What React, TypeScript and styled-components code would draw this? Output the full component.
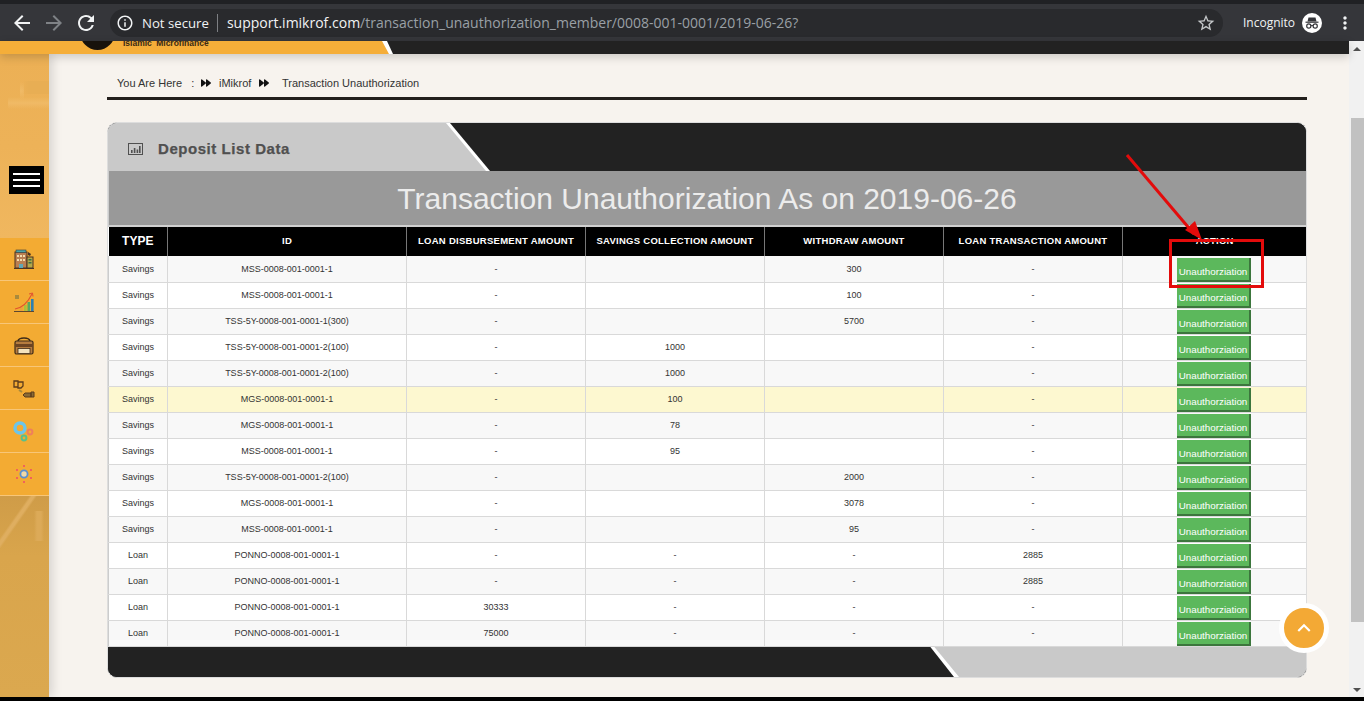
import React, { FC } from "react";
import styled, { createGlobalStyle } from "styled-components";
import { MdArrowBack, MdArrowForward, MdRefresh, MdInfoOutline, MdStarBorder, MdMoreVert, MdKeyboardArrowUp } from "react-icons/md";
import { FaForward } from "react-icons/fa";

const GlobalStyle = createGlobalStyle`
  html, body { margin: 0; padding: 0; height: 100%; overflow: hidden; background: #000; }
  #root { height: 100%; }
  * { box-sizing: border-box; }
`;

const Screen = styled.div`
  position: relative;
  width: 1364px;
  height: 701px;
  display: flex;
  flex-direction: column;
  overflow: hidden;
  font-family: "Liberation Sans", Arial, sans-serif;
`;

/* browser chrome */
const Toolbar = styled.div`
  height: 41px;
  flex: none;
  background: #35363a;
  border-top: 4px solid #202124;
  display: flex;
  align-items: center;
  padding-left: 6px;
  color: #f1f3f4;
  font-family: "Open Sans", "Noto Sans", sans-serif;
`;

const NavBtn = styled.span<{ $dim?: boolean }>`
  width: 32px;
  height: 32px;
  display: flex;
  align-items: center;
  justify-content: center;
  font-size: 24px;
  color: ${p => (p.$dim ? "#7f8286" : "#f1f3f4")};
`;

const MenuBtn = styled(NavBtn)`
  margin-left: 7px;
`;

const Omnibox = styled.div`
  width: 1113px;
  height: 28px;
  margin-left: 8px;
  background: #292a2d;
  border-radius: 14px;
  display: flex;
  align-items: center;
  padding: 0 7px 0 6px;
  font-size: 14px;
  white-space: nowrap;
`;

const SecureLabel = styled.span`
  margin-left: 8px;
  padding-right: 8px;
  border-right: 1px solid #7d7f83;
  line-height: 18px;
  font-size: 13.2px;
`;

const Url = styled.span`
  margin-left: 9px;
  flex: 1;
  color: #9aa0a6;
  font-size: 14px;
  span { color: #f1f3f4; }
`;

const IncognitoLabel = styled.span`
  margin-left: 20px;
  font-size: 12px;
  width: 59px;
`;

const Viewport = styled.div`
  flex: 1;
  display: flex;
  min-height: 0;
`;

const Page = styled.div`
  flex: 1;
  display: flex;
  flex-direction: column;
  background: #f7f3ee;
  min-width: 0;
`;

/* site header, mostly scrolled away */
const SiteHeader = styled.div`
  position: relative;
  z-index: 2;
  height: 13px;
  flex: none;
  background: #222;
  box-shadow: 0 3px 10px rgba(0, 0, 0, 0.18);
  overflow: hidden;
`;

const HeaderSlash = styled.div`
  width: 393px;
  height: 100%;
  background: #fff;
  clip-path: polygon(0 0, 387px 0, 393px 100%, 0 100%);
`;

const HeaderTab = styled.div`
  width: 389px;
  height: 100%;
  background: #f5ae39;
  clip-path: polygon(0 0, 382px 0, 389px 100%, 0 100%);
  display: flex;
  align-items: flex-start;
  padding-left: 80px;
`;

const LogoDisc = styled.div`
  width: 35px;
  height: 35px;
  margin-top: -26px;
  border-radius: 50%;
  background: #17120c;
  flex: none;
`;

const LogoText = styled.div`
  margin: -2px 0 0 8px;
  font-size: 8.5px;
  line-height: 9px;
  font-weight: bold;
  color: #3a2a14;
  word-spacing: 2px;
  white-space: nowrap;
`;

const Body = styled.div`
  flex: 1;
  display: flex;
  min-height: 0;
`;

const Sidebar = styled.aside`
  width: 49px;
  flex: none;
  display: flex;
  flex-direction: column;
  box-shadow: 3px 0 10px rgba(0, 0, 0, 0.14);
  position: relative;
`;

const SideTop = styled.div`
  height: 184px;
  flex: none;
  background:
    linear-gradient(90deg, transparent 0, #e8ae54 25%, #e8ae54 100%) 22px 27px / 27px 13px no-repeat,
    linear-gradient(180deg, transparent 0, #f0ba66 50%, transparent 100%) 8px 43px / 41px 12px no-repeat,
    linear-gradient(180deg, transparent 0, #f0ba66 50%, transparent 100%) 20px 28px / 4px 18px no-repeat,
    linear-gradient(180deg, #ecb055 0%, #edb258 50%, #f0b75f 100%);
  display: flex;
  align-items: flex-end;
  padding: 0 0 44px 9px;
`;

const Burger = styled.div`
  width: 35px;
  height: 28px;
  background: #000;
  display: flex;
  flex-direction: column;
  justify-content: center;
  gap: 4px;
  padding: 0 4px;
  span { display: block; height: 2px; background: #fff; }
`;

const SideItem = styled.div`
  height: 43px;
  flex: none;
  background: #f3ab33;
  border-bottom: 1px solid #f8c678;
  display: flex;
  align-items: center;
  justify-content: center;
  padding-right: 1px;
`;

const SideBottom = styled.div`
  flex: 1;
  background:
    linear-gradient(125deg, transparent 32%, #dfae60 35%, #dfae60 38%, transparent 41%) 0 0 / 49px 60px no-repeat,
    linear-gradient(90deg, transparent 0, #dcaa58 30%, #dcaa58 70%, transparent 100%) 34px 15px / 10px 30px no-repeat,
    linear-gradient(180deg, #cf9c48 0, #d9a54c 30%, #dba84f 100%);
`;

const Content = styled.main`
  flex: 1;
  min-width: 0;
  padding: 0 42px 0 58px;
`;

const Crumbs = styled.div`
  height: 46px;
  border-bottom: 3px solid #231f1c;
  padding: 21px 0 0 10px;
  display: flex;
  align-items: flex-start;
  font-size: 11px;
  line-height: 16px;
  color: #333;
`;

const CrumbLead = styled.span`
  width: 84px;
  flex: none;
`;

const CrumbSep = styled.span<{ $w: number }>`
  display: inline-flex;
  align-items: center;
  height: 16px;
  width: ${p => p.$w}px;
  flex: none;
  font-size: 10px;
  color: #111;
`;

const CrumbText = styled.span<{ $w?: number }>`
  flex: none;
  ${p => (p.$w ? `width: ${p.$w}px;` : "")}
`;

const Panel = styled.section`
  margin-top: 22px;
  height: 556px;
  border: 1px solid #ddd;
  border-radius: 10px;
  background: #222;
  overflow: hidden;
  display: flex;
  flex-direction: column;
`;

const PanelHead = styled.div`
  height: 48px;
  flex: none;
  background: #222;
`;

const HeadSlash = styled.div`
  width: 382px;
  height: 100%;
  background: #fff;
  clip-path: polygon(0 0, 342px 0, 382px 100%, 0 100%);
`;

const HeadTab = styled.div`
  height: 100%;
  background: #c9c9c9;
  clip-path: polygon(0 0, 338px 0, 378px 100%, 0 100%);
  display: flex;
  align-items: center;
  padding: 3px 0 0 20px;
  color: #505050;
  font-size: 15px;
  font-weight: bold;
  letter-spacing: 0.55px;
  -webkit-text-stroke: 0.25px #505050;
  gap: 15px;
`;

const TitleBand = styled.h1`
  margin: 0;
  height: 56px;
  flex: none;
  background: #999;
  border-bottom: 2px solid #d0d0d0;
  color: #ececec;
  font-size: 30px;
  font-weight: normal;
  line-height: 55px;
  text-align: center;
  box-shadow: inset 1px 0 0 #ccc;
`;

const Table = styled.table`
  width: 1198px;
  table-layout: fixed;
  border-collapse: collapse;
  flex: none;
  background: #fff;
`;

const HeadCell = styled.th<{ $w: number; $big?: boolean }>`
  width: ${p => p.$w}px;
  height: 29px;
  padding: 0 0 2px;
  background: #000;
  color: #fff;
  font-size: ${p => (p.$big ? "12px" : "9.5px")};
  font-weight: bold;
  letter-spacing: ${p => (p.$big ? "0" : "0.27px")};
  text-align: center;
  border-left: 1px solid #777;
  &:first-child { border-left: none; }
`;

const Row = styled.tr<{ $tone: "odd" | "even" | "hot" }>`
  height: 26px;
  background: ${p => (p.$tone === "hot" ? "#fdf8d0" : p.$tone === "odd" ? "#f8f8f8" : "#fff")};
`;

const Cell = styled.td`
  padding: 0;
  height: 26px;
  border: 1px solid #d9d9d9;
  border-top: none;
  font-size: 9px;
  color: #333;
  text-align: center;
  vertical-align: middle;
  &:first-child { border-left: 1px solid #ccc; }
`;

const ActionCell = styled(Cell)`
  vertical-align: bottom;
`;

const ActionBtn = styled.button`
  display: block;
  width: 74px;
  height: 24px;
  margin: 0 auto 0 54px;
  padding: 6px 0 0;
  border: none;
  border-right: 2px solid #3c763d;
  border-bottom: 2px solid #3c763d;
  background: #5cb85c;
  color: #fff;
  font-family: inherit;
  font-size: 9.8px;
  white-space: nowrap;
`;

const PanelFoot = styled.div`
  flex: 1;
  display: flex;
  justify-content: flex-end;
  background: #222;
`;

const FootSlash = styled.div`
  width: 376px;
  height: 100%;
  background: #fff;
  clip-path: polygon(0 0, 100% 0, 100% 100%, 24px 100%);
`;

const FootTab = styled.div`
  height: 100%;
  background: #c9c9c9;
  clip-path: polygon(4px 0, 100% 0, 100% 100%, 29px 100%);
`;

const ScrollTrack = styled.div`
  width: 15px;
  flex: none;
  background: #f1f1f1;
  display: flex;
  flex-direction: column;
  align-items: center;
  padding: 6px 0 5px;
`;

const ScrollThumb = styled.div`
  width: 13px;
  height: 504px;
  margin-top: 67px;
  align-self: flex-end;
  background: #c1c1c1;
`;

const ScrollArrow = styled.div<{ $down?: boolean }>`
  width: 0;
  height: 0;
  flex: none;
  border-left: 4px solid transparent;
  border-right: 4px solid transparent;
  ${p => (p.$down ? "margin-top: auto; border-top: 4px solid #505050;" : "border-bottom: 4px solid #505050;")}
`;

const BottomBar = styled.div`
  height: 4px;
  flex: none;
  background: #000;
`;

/* things lying over the page */
const ToTop = styled.div`
  position: absolute;
  left: 1279px;
  top: 603px;
  width: 50px;
  height: 50px;
  border-radius: 50%;
  background: #f3a935;
  border: 5px solid #fff;
  color: #fff;
  font-size: 26px;
  display: flex;
  align-items: center;
  justify-content: center;
`;

const RedBox = styled.div`
  position: absolute;
  left: 1169px;
  top: 239px;
  width: 95px;
  height: 49px;
  border: 3px solid #e30b0b;
`;

const RedArrow = styled.svg`
  position: absolute;
  left: 1120px;
  top: 150px;
`;

type RowData = [string, string, string, string, string, string];

const rows: RowData[] = [
  ["Savings", "MSS-0008-001-0001-1", "-", "", "300", "-"],
  ["Savings", "MSS-0008-001-0001-1", "-", "", "100", "-"],
  ["Savings", "TSS-5Y-0008-001-0001-1(300)", "-", "", "5700", "-"],
  ["Savings", "TSS-5Y-0008-001-0001-2(100)", "-", "1000", "", "-"],
  ["Savings", "TSS-5Y-0008-001-0001-2(100)", "-", "1000", "", "-"],
  ["Savings", "MGS-0008-001-0001-1", "-", "100", "", "-"],
  ["Savings", "MGS-0008-001-0001-1", "-", "78", "", "-"],
  ["Savings", "MSS-0008-001-0001-1", "-", "95", "", "-"],
  ["Savings", "TSS-5Y-0008-001-0001-2(100)", "-", "", "2000", "-"],
  ["Savings", "MGS-0008-001-0001-1", "-", "", "3078", "-"],
  ["Savings", "MSS-0008-001-0001-1", "-", "", "95", "-"],
  ["Loan", "PONNO-0008-001-0001-1", "-", "-", "-", "2885"],
  ["Loan", "PONNO-0008-001-0001-1", "-", "-", "-", "2885"],
  ["Loan", "PONNO-0008-001-0001-1", "30333", "-", "-", "-"],
  ["Loan", "PONNO-0008-001-0001-1", "75000", "-", "-", "-"],
];

const columns: { label: string; w: number; big?: boolean }[] = [
  { label: "TYPE", w: 59, big: true },
  { label: "ID", w: 239 },
  { label: "LOAN DISBURSEMENT AMOUNT", w: 179 },
  { label: "SAVINGS COLLECTION AMOUNT", w: 179 },
  { label: "WITHDRAW AMOUNT", w: 179 },
  { label: "LOAN TRANSACTION AMOUNT", w: 179 },
  { label: "ACTION", w: 184 },
];

const IncognitoIcon: FC = () => (
  <svg width="20" height="20" viewBox="0 0 20 20">
    <circle cx="10" cy="10" r="10" fill="#fff" />
    <path d="M6.5 4.5h7l1 4h-9z" fill="#35363a" />
    <rect x="3.5" y="8.6" width="13" height="1.2" fill="#35363a" />
    <circle cx="6.8" cy="13" r="2.1" fill="none" stroke="#35363a" strokeWidth="1.2" />
    <circle cx="13.2" cy="13" r="2.1" fill="none" stroke="#35363a" strokeWidth="1.2" />
    <path d="M8.9 12.6h2.2" stroke="#35363a" strokeWidth="1" />
  </svg>
);

const ChartBoxIcon: FC = () => (
  <svg width="15" height="12" viewBox="0 0 15 12">
    <rect x="0.5" y="0.5" width="14" height="11" fill="none" stroke="#505050" />
    <path d="M3 7h1.6v3H3zM5.8 5h1.6v5H5.8zM8.6 6.5h1.6V10H8.6zM11 3h1.6v7H11z" fill="#505050" />
  </svg>
);

const BuildingIcon: FC = () => (
  <svg width="22" height="22" viewBox="0 0 22 22">
    <rect x="2" y="4" width="12" height="16" fill="#b97f52" stroke="#4a3322" />
    <rect x="3" y="2" width="10" height="2.5" fill="#4aa3a8" stroke="#3a3a3a" strokeWidth="0.6" />
    <path d="M4 7h2v2H4zM7 7h2v2H7zM10 7h2v2h-2zM4 11h2v2H4zM7 11h2v2H7zM10 11h2v2h-2z" fill="#f2dcae" />
    <rect x="6" y="16" width="4" height="4" fill="#5fa7b5" />
    <rect x="14" y="9" width="6" height="11" fill="#b5a84a" stroke="#4a3322" />
    <path d="M15.5 11h3v1.5h-3zM15.5 14h3v1.5h-3z" fill="#3f6b45" />
    <path d="M15 4l3 2-1 2-2-1z" fill="#4a3322" />
    <path d="M1 20.5h20" stroke="#4a3322" />
  </svg>
);

const GrowthIcon: FC = () => (
  <svg width="22" height="22" viewBox="0 0 22 22">
    <rect x="2" y="4" width="4" height="4" fill="#a98a3c" />
    <rect x="7" y="16" width="2.6" height="4" fill="#e8a33a" />
    <rect x="11" y="14" width="2.6" height="6" fill="#a9c23a" />
    <rect x="14.5" y="11" width="2.6" height="9" fill="#58a860" />
    <rect x="18" y="8" width="2.6" height="12" fill="#2f7fb0" />
    <path d="M2 18C9 17 15 11 19 3" fill="none" stroke="#e2512f" strokeWidth="1.1" />
    <path d="M16 3l3.5-1 .5 3.5" fill="none" stroke="#e2512f" />
    <path d="M1 20.5h20" stroke="#5d4630" />
  </svg>
);

const CaseIcon: FC = () => (
  <svg width="22" height="22" viewBox="0 0 22 22">
    <path d="M5 7C6 3 16 3 17 7" fill="none" stroke="#3f2c18" strokeWidth="1.6" />
    <rect x="2" y="7" width="18" height="13" rx="1.5" fill="#b57c3e" stroke="#3f2c18" strokeWidth="1.2" />
    <rect x="2" y="10" width="18" height="3" fill="#6d4522" />
    <rect x="5" y="14.5" width="12" height="5" fill="#f3e3bd" stroke="#3f2c18" strokeWidth="0.8" />
  </svg>
);

const HandsIcon: FC = () => (
  <svg width="22" height="22" viewBox="0 0 22 22">
    <path d="M1 4h4v6H1zM5 5h5v4l-2 2H5z" fill="none" stroke="#5b3c1c" strokeWidth="1.3" />
    <path d="M6 13l3 2" stroke="#a98a3c" strokeWidth="2" />
    <path d="M21 20h-3v-5h3zM18 16h-6l-2 2 2 2h6z" fill="#8a6a35" stroke="#5b3c1c" strokeWidth="1" />
  </svg>
);

const GearsIcon: FC = () => (
  <svg width="24" height="24" viewBox="0 0 24 24">
    <circle cx="8" cy="9" r="5" fill="none" stroke="#6cc5ea" strokeWidth="3.4" />
    <circle cx="18" cy="13" r="2.4" fill="none" stroke="#ef7f5c" strokeWidth="2" />
    <circle cx="12" cy="19" r="2.4" fill="none" stroke="#59c08a" strokeWidth="2" />
  </svg>
);

const NetworkIcon: FC = () => (
  <svg width="22" height="22" viewBox="0 0 22 22">
    <circle cx="11" cy="11" r="3.6" fill="#f0d9a8" stroke="#5a8fd0" strokeWidth="1.8" />
    <path d="M10 2h2v2h-2zM10 18h2v2h-2zM3 6h2v2H3zM17 6h2v2h-2zM3 14h2v2H3zM17 14h2v2h-2z" fill="#f0635a" />
  </svg>
);

const sideIcons = [BuildingIcon, GrowthIcon, CaseIcon, HandsIcon, GearsIcon, NetworkIcon];

const App: FC = () => (
  <Screen>
    <GlobalStyle />
    <Toolbar>
      <NavBtn><MdArrowBack /></NavBtn>
      <NavBtn $dim><MdArrowForward /></NavBtn>
      <NavBtn><MdRefresh /></NavBtn>
      <Omnibox>
        <MdInfoOutline size={18} />
        <SecureLabel>Not secure</SecureLabel>
        <Url>
          <span>support.imikrof.com</span>/transaction_unauthorization_member/0008-001-0001/2019-06-26?
        </Url>
        <MdStarBorder size={20} color="#c4c7c9" />
      </Omnibox>
      <IncognitoLabel>Incognito</IncognitoLabel>
      <IncognitoIcon />
      <MenuBtn><MdMoreVert size={20} /></MenuBtn>
    </Toolbar>

    <Viewport>
      <Page>
        <SiteHeader>
          <HeaderSlash>
            <HeaderTab>
              <LogoDisc />
              <LogoText>Islamic Microfinance</LogoText>
            </HeaderTab>
          </HeaderSlash>
        </SiteHeader>
        <Body>
          <Sidebar>
            <SideTop>
              <Burger><span /><span /><span /></Burger>
            </SideTop>
            {sideIcons.map((Icon, i) => (
              <SideItem key={i}><Icon /></SideItem>
            ))}
            <SideBottom />
          </Sidebar>
          <Content>
            <Crumbs>
              <CrumbLead>You Are Here&nbsp;&nbsp;&nbsp;:</CrumbLead>
              <CrumbSep $w={18}><FaForward /></CrumbSep>
              <CrumbText $w={40}>iMikrof</CrumbText>
              <CrumbSep $w={23}><FaForward /></CrumbSep>
              <CrumbText>Transaction Unauthorization</CrumbText>
            </Crumbs>
            <Panel>
              <PanelHead>
                <HeadSlash>
                  <HeadTab>
                    <ChartBoxIcon />
                    Deposit List Data
                  </HeadTab>
                </HeadSlash>
              </PanelHead>
              <TitleBand>Transaction Unauthorization As on 2019-06-26</TitleBand>
              <Table>
                <thead>
                  <tr>
                    {columns.map(c => (
                      <HeadCell key={c.label} $w={c.w} $big={c.big}>{c.label}</HeadCell>
                    ))}
                  </tr>
                </thead>
                <tbody>
                  {rows.map((r, i) => (
                    <Row key={i} $tone={i === 5 ? "hot" : i % 2 === 0 ? "odd" : "even"}>
                      {r.map((v, j) => (
                        <Cell key={j}>{v}</Cell>
                      ))}
                      <ActionCell><ActionBtn>Unauthorziation</ActionBtn></ActionCell>
                    </Row>
                  ))}
                </tbody>
              </Table>
              <PanelFoot>
                <FootSlash><FootTab /></FootSlash>
              </PanelFoot>
            </Panel>
          </Content>
        </Body>
      </Page>
      <ScrollTrack>
        <ScrollArrow />
        <ScrollThumb />
        <ScrollArrow $down />
      </ScrollTrack>
    </Viewport>
    <BottomBar />

    <ToTop><MdKeyboardArrowUp /></ToTop>
    <RedBox />
    <RedArrow width="100" height="110" viewBox="0 0 100 110">
      <path d="M7 5L74 84" stroke="#e30b0b" strokeWidth="3" />
      <path d="M82 90L65 80L75 71z" fill="#e30b0b" />
    </RedArrow>
  </Screen>
);

export default App;
